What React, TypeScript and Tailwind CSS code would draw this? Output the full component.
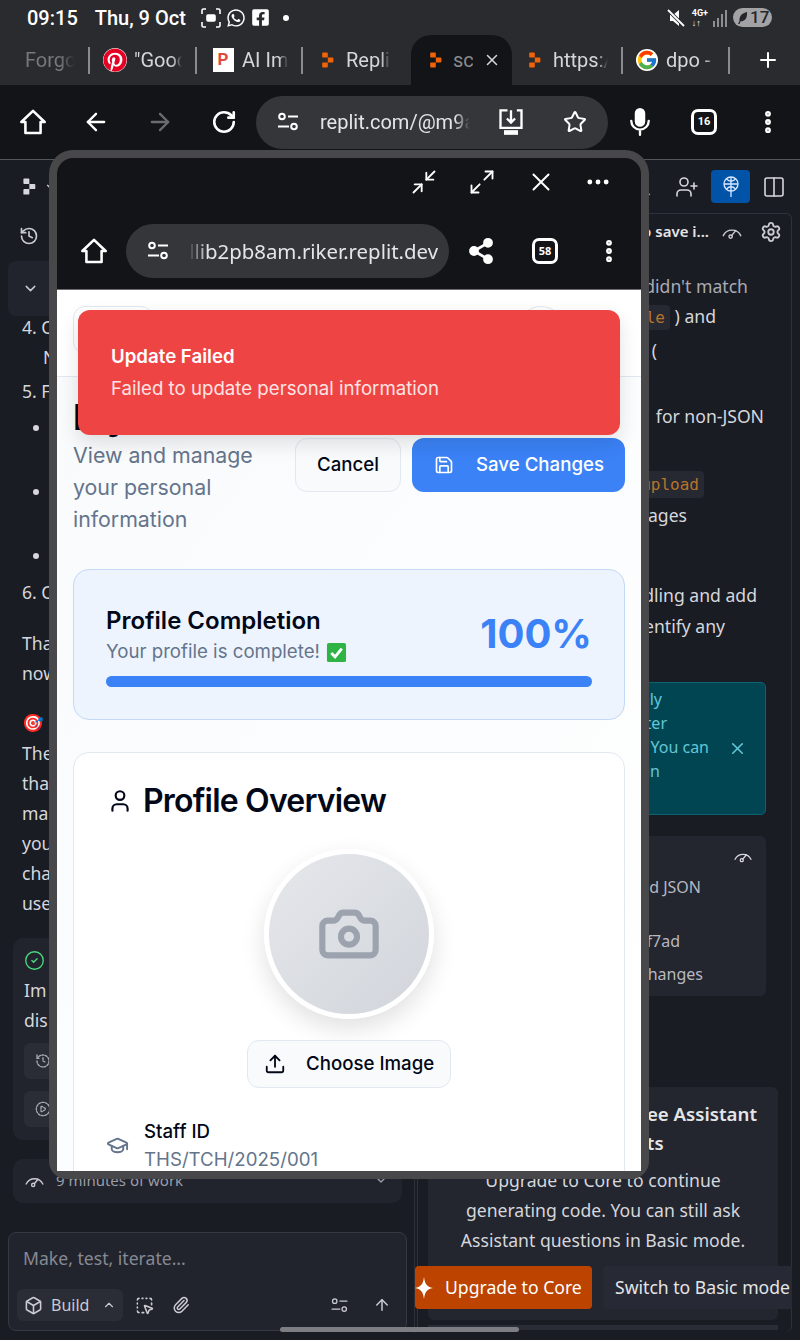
import {
  ArrowLeft,
  ArrowRight,
  ArrowUp,
  Box,
  Camera,
  ChevronDown,
  ChevronUp,
  CircleCheck,
  CirclePlay,
  Columns2,
  GraduationCap,
  History,
  Maximize2,
  Minimize2,
  MoreHorizontal,
  MoreVertical,
  Paperclip,
  Plus,
  RotateCw,
  Save,
  Search,
  Settings,
  Share2,
  SquareDashedMousePointer,
  Star,
  Upload,
  User,
  UserPlus,
  X,
} from 'lucide-react';
import { FaFacebookSquare, FaPinterest, FaWhatsapp } from 'react-icons/fa';
import { FcGoogle } from 'react-icons/fc';

function HomeIcon({ size = 28 }: { size?: number }) {
  return (
    <svg width={size} height={size} viewBox="0 0 24 24" fill="none" stroke="white" strokeWidth="2.2" strokeLinejoin="round">
      <path d="M12 2.5 22 12h-3.5v9.5h-13V12H2z" />
    </svg>
  );
}

function TuneIcon({ size = 24, color = 'white', width = 2 }: { size?: number; color?: string; width?: number }) {
  return (
    <svg width={size} height={size} viewBox="0 0 24 24" fill="none" stroke={color} strokeWidth={width}>
      <circle cx="6" cy="6.5" r="2.8" />
      <path d="M12 6.5h10M2 16.5h11" />
      <circle cx="18" cy="16.5" r="2.8" />
    </svg>
  );
}

// arc with a needle, the usage meter icon of the chat panel
function GaugeIcon({ size = 22, color = '#c9cbd1' }: { size?: number; color?: string }) {
  return (
    <svg width={size} height={size} viewBox="0 0 24 24" fill="none" stroke={color} strokeWidth="1.6" strokeLinecap="round">
      <path d="M2.500 16a10.500 10.500 0 0 1 19 0" />
      <circle cx="10.500" cy="17" r="1.800" />
      <path d="m11.800 15.700 4.200-5.200" />
    </svg>
  );
}

function ReplitLogo({ color = '#f26207', size = 16 }: { color?: string; size?: number }) {
  return (
    <svg width={size} height={size} viewBox="0 0 16 20" fill={color}>
      <path d="M2 1.500a1 1 0 0 1 1-1h5a1 1 0 0 1 1 1V7H3a1 1 0 0 1-1-1z" />
      <path d="M9 7h6a1 1 0 0 1 1 1v4a1 1 0 0 1-1 1H9z" />
      <path d="M3 13h6v5.500a1 1 0 0 1-1 1H3a1 1 0 0 1-1-1V14a1 1 0 0 1 1-1z" />
    </svg>
  );
}

function TabCount({ value }: { value: string }) {
  return (
    <span className="flex h-[26px] w-[26px] items-center justify-center rounded-[7px] border-[3px] border-white text-[11px] font-bold text-white">
      {value}
    </span>
  );
}

function Sep() {
  return <span className="h-[27px] w-[2px] shrink-0 bg-[#8a8b8f]" />;
}

function Tab({ icon, label, width }: { icon: React.ReactNode; label: string; width: string }) {
  return (
    <div className={`flex shrink-0 items-center gap-[7px] pr-[13px] ${width}`}>
      <span className="flex h-[24px] w-[24px] shrink-0 items-center justify-center">{icon}</span>
      <span className="overflow-hidden whitespace-nowrap text-[20px] text-[#d5d6d9] [mask-image:linear-gradient(90deg,black_80%,transparent)]">
        {label}
      </span>
    </div>
  );
}

function StatusBar() {
  return (
    <div className="flex h-[35px] items-center bg-[#2a2b2f] pl-[27px] pr-[28px] text-white">
      <span className="text-[20px] font-medium">09:15</span>
      <span className="ml-[17px] text-[20px] font-medium">Thu, 9 Oct</span>
      <svg className="ml-[15px]" width="20" height="20" viewBox="0 0 20 20" fill="none" stroke="white" strokeWidth="1.6">
        <path d="M1 6V2.500A1.500 1.500 0 0 1 2.500 1H5M15 1h2.500A1.500 1.500 0 0 1 19 2.500V6M19 14v3.500a1.500 1.500 0 0 1-1.500 1.500H15M5 19H2.500A1.500 1.500 0 0 1 1 17.500V14" />
        <rect x="6" y="7" width="8" height="6" rx="1" fill="white" />
      </svg>
      <FaWhatsapp className="ml-[5px]" size={20} />
      <FaFacebookSquare className="ml-[5px]" size={19} />
      <span className="ml-[13px] h-[6px] w-[6px] rounded-full bg-white" />
      <svg className="ml-auto" width="18" height="20" viewBox="0 0 18 20" fill="white">
        <path d="M3 7h3l6-5v16l-6-5H3z" />
        <path d="m1 2 16 16" stroke="#2a2b2f" strokeWidth="3.500" />
        <path d="m1 2 16 16" stroke="white" strokeWidth="1.800" />
      </svg>
      <span className="ml-[7px] flex flex-col text-[9px] font-bold leading-[10px]">
        <span>4G+</span>
        <span>↓↑</span>
      </span>
      <svg className="ml-[5px]" width="15" height="18" viewBox="0 0 15 18" fill="#8d8e91">
        <rect x="0" y="12" width="2" height="6" />
        <rect x="4" y="9" width="2" height="9" />
        <rect x="8" y="5" width="2" height="13" />
        <rect x="12" y="1" width="2" height="17" />
      </svg>
      <span className="ml-[5px] flex h-[19px] w-[39px] items-center rounded-full bg-[#a3a3a5] pl-[5px] text-[17px] font-medium text-[#26272b]">
        <svg width="10" height="12" viewBox="0 0 10 12" fill="#26272b">
          <path d="M9 0C4 1 1 4 1.500 9L0 12h1.500l1-2.500C7 9.500 9.500 6 9 0z" />
        </svg>
        <span className="ml-[2px]">17</span>
      </span>
    </div>
  );
}

function TabStrip() {
  return (
    <div className="flex h-[50px] items-center bg-[#2a2b2f] pl-[25px] text-[#d5d6d9]">
      <span className="w-[50px] overflow-hidden text-[20px] text-[#77787c] [mask-image:linear-gradient(90deg,black_70%,transparent)]">Forgot</span>
      <span className="w-[13px] shrink-0" />
      <Sep />
      <span className="w-[13px] shrink-0" />
      <Tab width="w-[92px]" icon={<FaPinterest size={24} color="#e60023" className="rounded-full bg-white" />} label={'"Good'} />
      <Sep />
      <span className="w-[14px] shrink-0" />
      <Tab width="w-[90px]" icon={<span className="flex h-[24px] w-[21px] items-center justify-center bg-white text-[17px] font-bold text-[#e0483e]">P</span>} label="AI Image" />
      <Sep />
      <span className="w-[12px] shrink-0" />
      <Tab width="w-[88px]" icon={<ReplitLogo />} label="Replit" />
      <div className="ml-[8px] flex h-[50px] w-[101px] shrink-0 items-center rounded-t-[20px] bg-[#131417] pl-[12px]">
        <span className="flex h-[24px] w-[24px] items-center justify-center">
          <ReplitLogo />
        </span>
        <span className="ml-[6px] w-[20px] overflow-hidden text-[20px] text-[#8a8b8f]">sch</span>
        <X className="ml-[10px]" size={18} color="#d5d6d9" />
      </div>
      <span className="w-[10px] shrink-0" />
      <Tab width="w-[99px]" icon={<ReplitLogo />} label="https://" />
      <Sep />
      <span className="w-[12px] shrink-0" />
      <Tab width="w-[93px]" icon={<FcGoogle size={22} className="rounded-full bg-white" />} label="dpo - G" />
      <Sep />
      <Plus className="ml-[26px]" size={24} color="white" />
    </div>
  );
}

function Toolbar() {
  return (
    <div className="flex h-[75px] items-center border-b border-[#55565a] bg-[#131417] pl-[19px] text-white">
      <HomeIcon />
      <ArrowLeft className="ml-[35px]" size={28} />
      <ArrowRight className="ml-[36px]" size={28} color="#6b6c70" />
      <RotateCw className="ml-[37px]" size={26} strokeWidth={2.4} />
      <div className="ml-[19px] flex h-[53px] w-[352px] items-center rounded-full bg-[#35363a] pl-[20px]">
        <TuneIcon />
        <span className="ml-[20px] w-[150px] overflow-hidden whitespace-nowrap text-[20px] text-[#e4e5e7] [mask-image:linear-gradient(90deg,black_90%,transparent)]">replit.com/@m9abc</span>
        <svg className="ml-[27px]" width="28" height="28" viewBox="0 0 24 24" fill="none" stroke="white" strokeWidth="2">
          <path d="M9 2H3v15h18V2h-4M12 2v10M8.500 9l3.500 3.500L15.500 9" />
          <path d="M7 20h10v2H7z" fill="white" />
        </svg>
        <Star className="ml-[38px]" size={24} strokeWidth={2} />
      </div>
      <svg className="ml-[18px]" width="28" height="30" viewBox="0 0 24 24" fill="none" stroke="white" strokeWidth="2" strokeLinecap="round">
        <rect x="8.500" y="1" width="7" height="14" rx="3.500" fill="white" />
        <path d="M4.500 11a7.500 7.500 0 0 0 15 0M12 18.500V23" />
      </svg>
      <span className="ml-[37px]">
        <TabCount value="16" />
      </span>
      <MoreVertical className="ml-[37px]" size={28} strokeWidth={3} />
    </div>
  );
}

function Line({ children, className = '' }: { children: React.ReactNode; className?: string }) {
  return <div className={`h-[30px] whitespace-nowrap leading-[30px] ${className}`}>{children}</div>;
}

function LeftColumn() {
  return (
    <div className="flex w-[415px] shrink-0 flex-col border-r border-[#2d303a] text-[17.6px] text-[#d5d7dc]">
      <div className="flex h-[46px] items-center pl-[19px]">
        <History size={20} color="#c9cbd1" />
      </div>
      <div className="ml-[8px] mt-[2px] flex h-[55px] w-[200px] items-center rounded-[8px] bg-[#22242d] pl-[14px]">
        <ChevronDown size={17} color="#c9cbd1" />
      </div>
      <div className="-mt-[4px] pl-[22px]">
        <Line>4. Changed the form handling</Line>
        <Line className="pl-[21px]">Now sends the right fields</Line>
        <Line className="mt-[4px]">5. Fixed the upload route</Line>
      </div>
      <ul className="mt-[6px] list-disc pl-[52px]">
        <li className="mb-[4px] leading-[30px]">Parses each response safely and then<br />returns it</li>
        <li className="mb-[4px] leading-[30px]">Logs the server status for review and<br />returns it</li>
        <li className="leading-[30px]">Shows a clear message</li>
      </ul>
      <div className="mt-[7px] pl-[22px]">
        <Line>6. Clear error logging</Line>
        <Line className="mt-[21px]">That should fix the profile update,</Line>
        <Line>now try it again.</Line>
        <Line className="mt-[19px]">🎯 &nbsp;Summary</Line>
        <Line className="mt-[1px]">The problem was a mismatch</Line>
        <Line>that stopped saving,</Line>
        <Line>making the request fail before</Line>
        <Line>you could see why. The</Line>
        <Line>changes now let the page</Line>
        <Line>use the right fields.</Line>
      </div>
      <div className="ml-[13px] mt-[20px] flex h-[202px] w-[389px] flex-col rounded-[10px] bg-[#22242d] px-[11px] pt-[12px]">
        <CircleCheck size={21} color="#4ade80" strokeWidth={1.5} />
        <Line className="mt-[4px]">Im&nbsp;proved profile update</Line>
        <Line>dis&nbsp;play of errors</Line>
        <div className="mt-[8px] flex h-[36px] items-center rounded-[6px] bg-[#2a2c36] pl-[11px]">
          <History size={16} color="#a9abb3" strokeDasharray="3 2" />
        </div>
        <div className="mt-[12px] flex h-[36px] items-center rounded-[6px] bg-[#2a2c36] pl-[11px]">
          <CirclePlay size={16} color="#a9abb3" strokeDasharray="3 2" />
        </div>
      </div>
      <div className="ml-[13px] mt-[19px] flex h-[44px] w-[389px] items-center rounded-[10px] bg-[#22242d] pb-[2px] pl-[11px] pr-[13px] text-[15px] text-[#9a9da6]">
        <GaugeIcon size={21} />
        <span className="ml-[11px]">9 minutes of work</span>
        <ChevronDown className="ml-auto" size={16} />
      </div>
      <div className="ml-[8px] mt-[29px] flex h-[99px] w-[399px] flex-col rounded-[8px] border border-[#363944] bg-[#22242d] pl-[8px] pr-[15px]">
        <div className="mt-[10px] pl-[6px] text-[17.6px] leading-[30px] text-[#868993]">Make, test, iterate...</div>
        <div className="mt-[16px] flex items-center text-[#c9cbd1]">
          <div className="flex h-[32px] w-[106px] items-center rounded-[6px] bg-[#2a2c36] pl-[7px] text-[16px]">
            <Box size={19} />
            <span className="ml-[8px]">Build</span>
            <ChevronUp className="ml-auto mr-[7px]" size={14} />
          </div>
          <SquareDashedMousePointer className="ml-[12px]" size={19} />
          <Paperclip className="ml-[18px]" size={18} />
          <span className="ml-auto">
            <TuneIcon size={19} color="#c9cbd1" width={1.6} />
          </span>
          <ArrowUp className="ml-[24px]" size={18} />
        </div>
      </div>
    </div>
  );
}

function RightLine({ children, end, className = '' }: { children: React.ReactNode; end: string; className?: string }) {
  return <div className={`h-[30px] whitespace-nowrap text-right leading-[30px] ${end} ${className}`}>{children}</div>;
}

function RightColumn() {
  return (
    <div className="h-[1120px] w-[377px] shrink-0 overflow-hidden text-[17.6px] text-[#d5d7dc]">
      <div className="ml-[2px] h-[1119px] w-[375px] rounded-[6px] border border-[#2f323c] border-b-0">
        <div className="flex h-[35px] items-center justify-end pr-[9px]">
          <span className="text-[15px] font-semibold text-[#e4e5e7]">Fix profile to save i...</span>
          <span className="ml-[12px]">
            <GaugeIcon />
          </span>
          <Settings className="ml-[17px]" size={22} color="#c9cbd1" />
        </div>
        <div className="mt-[22px]">
          <RightLine end="pr-[43px]" className="text-[#a9abb3]">the fields didn't match</RightLine>
          <RightLine end="pr-[75px]">
            <code className="rounded-[4px] bg-[#262832] px-[5px] py-[3px] font-['DejaVu_Sans_Mono',monospace] text-[16px] text-[#b8742a]">profile</code> ) and
          </RightLine>
          <RightLine end="pr-[134px]" className="mt-[4px]">schema (</RightLine>
          <RightLine end="pr-[27px]" className="mt-[36px]">for non-JSON</RightLine>
          <RightLine end="pr-[87px]" className="mt-[37px]">
            <code className="rounded-[4px] bg-[#262832] px-[5px] py-[4px] font-['DejaVu_Sans_Mono',monospace] text-[16px] text-[#b8742a]">/api/upload</code>
          </RightLine>
          <RightLine end="pr-[104px]" className="mt-[2px]">error messages</RightLine>
          <RightLine end="pr-[34px]" className="mt-[50px]">Better handling and add</RightLine>
          <RightLine end="pr-[66px]" className="mt-[1px]">logs to identify any</RightLine>
        </div>
        <div className="ml-[30px] mt-[41px] flex h-[133px] w-[318px] items-center rounded-[5px] border border-[#0b6372] bg-[#024552] pr-[18px] text-[16px] leading-[24px] text-[#62c6d6]">
          <div className="flex-1 text-right whitespace-nowrap">
            <div className="pr-[47px]">Automatically</div>
            <div className="pr-[42px]">saved after</div>
            <div>checkpoint. You can</div>
            <div className="pr-[49px]">roll back in</div>
            <div className="h-[28px]" />
          </div>
          <X className="ml-[19px]" size={19} />
        </div>
        <div className="ml-[30px] mt-[21px] h-[160px] w-[318px] rounded-[6px] bg-[#23252f] pr-[13px] pt-[10px] text-right text-[16px] text-[#b7b9c0]">
          <span className="flex justify-end">
            <GaugeIcon size={20} color="#d5d7dc" />
          </span>
          <div className="mr-[52px] mt-[9px] leading-[24px]">Handled JSON</div>
          <div className="mr-[73px] mt-[30px] leading-[24px] whitespace-nowrap">Commit 9f7ad</div>
          <div className="mr-[50px] mt-[9px] leading-[24px] whitespace-nowrap">See changes</div>
        </div>
        <div className="ml-[10px] mt-[91px] h-[233px] w-[350px] rounded-[6px] bg-[#23252f] pt-[12px]">
          <div className="text-center text-[18.67px] font-semibold leading-[29px] text-[#e4e5e7]">
            You have run out of free Assistant
            <br />
            Agent credits
          </div>
          <p className="mt-[8px] text-center leading-[30px] text-[#d5d7dc]">
            Upgrade to Core to continue
            <br />
            generating code. You can still ask
            <br />
            Assistant questions in Basic mode.
          </p>
          <div className="-ml-[13px] mt-[11px] flex gap-[11px]">
            <div className="flex h-[43px] w-[177px] shrink-0 items-center rounded-[4px] bg-[#bc4400] text-white">
              <svg width="18" height="22" viewBox="0 0 18 22" fill="white">
                <path d="M9 0c1 7 2.500 9.500 9 11-6.500 1.500-8 4-9 11-1-7-2.500-9.500-9-11 6.500-1.500 8-4 9-11z" />
              </svg>
              <span className="ml-[12px] whitespace-nowrap">Upgrade to Core</span>
            </div>
            <div className="flex h-[43px] w-[250px] shrink-0 items-center rounded-[4px] bg-[#272934] pl-[12px] whitespace-nowrap text-[#e4e5e7]">
              Switch to Basic mode
            </div>
          </div>
        </div>
        <div className="ml-[10px] mt-[5px] h-[5px] w-[350px] bg-[#2a2c36]" />
      </div>
    </div>
  );
}

function ProfilePage() {
  return (
    <div className="h-[881px] overflow-hidden bg-gradient-to-br from-[#f8fafc] to-white font-['Inter',sans-serif]">
      <div className="flex h-[87px] items-start justify-between border-b border-[#e2e8f0] bg-white px-[16px] pt-[16px]">
        <div className="h-[48px] w-[80px] rounded-[12px] border border-[#e2e8f0]" />
        <div className="mr-[60px] h-[48px] w-[48px] rounded-full border border-[#e2e8f0]" />
      </div>
      <div className="px-[16px]">
        <div className="flex items-start justify-between">
          <div className="w-[210px] pt-[20px]">
            <h1 className="text-[36px] font-bold leading-[40px] text-[#020817] whitespace-nowrap">My Profile</h1>
            <p className="mt-[2px] text-[21.33px] leading-[32px] text-[#64748b]">
              View and manage
              <br />
              your personal
              <br />
              information
            </p>
          </div>
          <div className="mt-[61px] flex gap-[11px]">
            <button className="h-[54px] w-[106px] rounded-[12px] border border-[#e2e8f0] bg-[#f8fafc] pb-[1px] text-[18.67px] font-medium text-[#020817]">
              Cancel
            </button>
            <button className="flex h-[54px] w-[213px] items-center rounded-[12px] bg-[#3b82f6] pb-[1px] pl-[22px] text-[18.67px] font-medium text-white">
              <Save size={20} />
              <span className="ml-[22px]">Save Changes</span>
            </button>
          </div>
        </div>
        <div className="mt-[34px] h-[151px] rounded-[16px] border border-[#c3d9f5] bg-[#eef4fe] px-[32px] pt-[33px]">
          <div className="flex items-center justify-between">
            <div>
              <div className="text-[24px] font-semibold leading-[36px] text-[#020817]">Profile Completion</div>
              <div className="mt-[1px] flex items-center gap-[6px] text-[18.67px] leading-[24px] text-[#64748b]">
                Your profile is complete!
                <svg width="21" height="21" viewBox="0 0 22 22">
                  <rect x="1" y="1" width="20" height="20" rx="2" fill="#2fb344" />
                  <path d="m5.500 11.500 4 4 7-8.500" fill="none" stroke="white" strokeWidth="3" />
                </svg>
              </div>
            </div>
            <div className="text-[40px] font-bold leading-[44px] text-[#3b82f6]">100%</div>
          </div>
          <div className="mt-[12px] h-[11px] rounded-full bg-[#3b82f6]" />
        </div>
        <div className="mt-[32px] rounded-t-[16px] border border-[#e2e8f0] bg-white pb-[40px]">
          <div className="flex items-center pl-[32px] pt-[24px]">
            <User size={26} color="#020817" className="ml-[1px]" />
            <h2 className="ml-[10px] text-[32px] font-semibold leading-[48px] tracking-[-0.8px] text-[#020817]">Profile Overview</h2>
          </div>
          <div className="mt-[24px] flex flex-col items-center">
            <div className="flex h-[170px] w-[170px] items-center justify-center rounded-full border-[5px] border-white bg-gradient-to-br from-[#e5e7eb] to-[#d1d5db] shadow-[0_10px_25px_rgba(0,0,0,0.12)]">
              <Camera size={64} color="#9ca3af" strokeWidth={2.3} />
            </div>
            <button className="mt-[21px] flex h-[48px] w-[204px] items-center rounded-[12px] border border-[#e2e8f0] bg-[#f8fafc] pl-[16px] text-[18.67px] font-medium text-[#020817]">
              <Upload size={22} />
              <span className="ml-[20px]">Choose Image</span>
            </button>
          </div>
          <div className="mt-[30px] flex items-center pl-[32px]">
            <GraduationCap size={23} color="#64748b" />
            <div className="ml-[15px]">
              <div className="text-[18.67px] font-medium leading-[28px] text-[#020817]">Staff ID</div>
              <div className="text-[18.67px] leading-[27px] text-[#64748b]">THS/TCH/2025/001</div>
            </div>
          </div>
        </div>
      </div>
    </div>
  );
}

function FloatingWindow() {
  return (
    <div className="absolute left-[49px] top-[150px] h-[1029px] w-[600px] rounded-b-[18px] rounded-t-[24px] bg-[#48484a] p-[8px]">
      <div className="h-[1013px] overflow-hidden rounded-t-[16px] bg-[#131417]">
        <div className="flex h-[131px] flex-col text-white">
          <div className="flex h-[45px] items-center justify-end pr-[29px] pt-[2px]">
            <Minimize2 size={28} strokeWidth={1.6} />
            <Maximize2 className="ml-[30px]" size={28} strokeWidth={1.6} />
            <X className="ml-[30px]" size={30} strokeWidth={1.6} />
            <MoreHorizontal className="ml-[28px]" size={28} strokeWidth={2.2} />
          </div>
          <div className="mt-[21px] flex items-center pl-[23px]">
            <HomeIcon />
            <div className="ml-[18px] flex h-[54px] w-[323px] items-center rounded-full bg-[#35363a] pl-[20px]">
              <TuneIcon />
              <span className="ml-[8px] flex w-[260px] justify-end overflow-hidden whitespace-nowrap text-[20.4px] text-[#e4e5e7] [mask-image:linear-gradient(90deg,transparent_10px,black_30px)]">
                llib2pb8am.riker.replit.dev
              </span>
            </div>
            <Share2 className="ml-[18px]" size={28} strokeWidth={2.4} fill="white" />
            <span className="ml-[37px]">
              <TabCount value="58" />
            </span>
            <MoreVertical className="ml-[37px]" size={28} strokeWidth={3} />
          </div>
        </div>
        <div className="relative border-t border-[#6b6c70]">
          <ProfilePage />
          <div className="absolute left-[21px] top-[20px] flex h-[125px] w-[542px] flex-col justify-center rounded-[12px] bg-[#ef4444] pl-[33px] font-['Inter',sans-serif] text-white shadow-[0_8px_20px_rgba(0,0,0,0.12)]">
            <div className="text-[18.67px] font-semibold leading-[28px]">Update Failed</div>
            <div className="mt-[4px] text-[18.67px] leading-[28px] text-[#fde3e3]">Failed to update personal information</div>
          </div>
        </div>
      </div>
    </div>
  );
}

export default function App() {
  return (
    <div className="relative h-[1340px] w-[800px] overflow-hidden bg-[#1a1c24] font-['Noto_Sans',sans-serif]">
      <div className="font-['Roboto',sans-serif]">
        <StatusBar />
        <TabStrip />
        <Toolbar />
      </div>
      <div className="flex h-[53px] items-center pl-[20px] pr-[14px] text-[#d5d7dc]">
        <ReplitLogo color="#d5d7dc" size={17} />
        <ChevronDown className="ml-[7px]" size={14} />
        <Search className="ml-auto" size={20} color="#9a9da6" strokeWidth={1.6} />
        <UserPlus className="ml-[23px]" size={24} strokeWidth={1.6} />
        <span className="ml-[12px] flex h-[33px] w-[39px] items-center justify-center rounded-[4px] bg-[#0053a6]">
          <svg width="18" height="22" viewBox="0 0 18 22" fill="none" stroke="#d9e8ff" strokeWidth="1.3">
            <circle cx="9" cy="8" r="7" />
            <path d="M2 8h14M9 1v20M4.500 3c3 3 6 3 9 0M4.500 13c3-3 6-3 9 0" />
          </svg>
        </span>
        <Columns2 className="ml-[12px]" size={24} strokeWidth={1.6} />
      </div>
      <div className="flex">
        <LeftColumn />
        <RightColumn />
      </div>
      <FloatingWindow />
      <div className="absolute left-[280px] top-[1327px] h-[5px] w-[239px] rounded-full bg-[#7d7e83]" />
    </div>
  );
}
